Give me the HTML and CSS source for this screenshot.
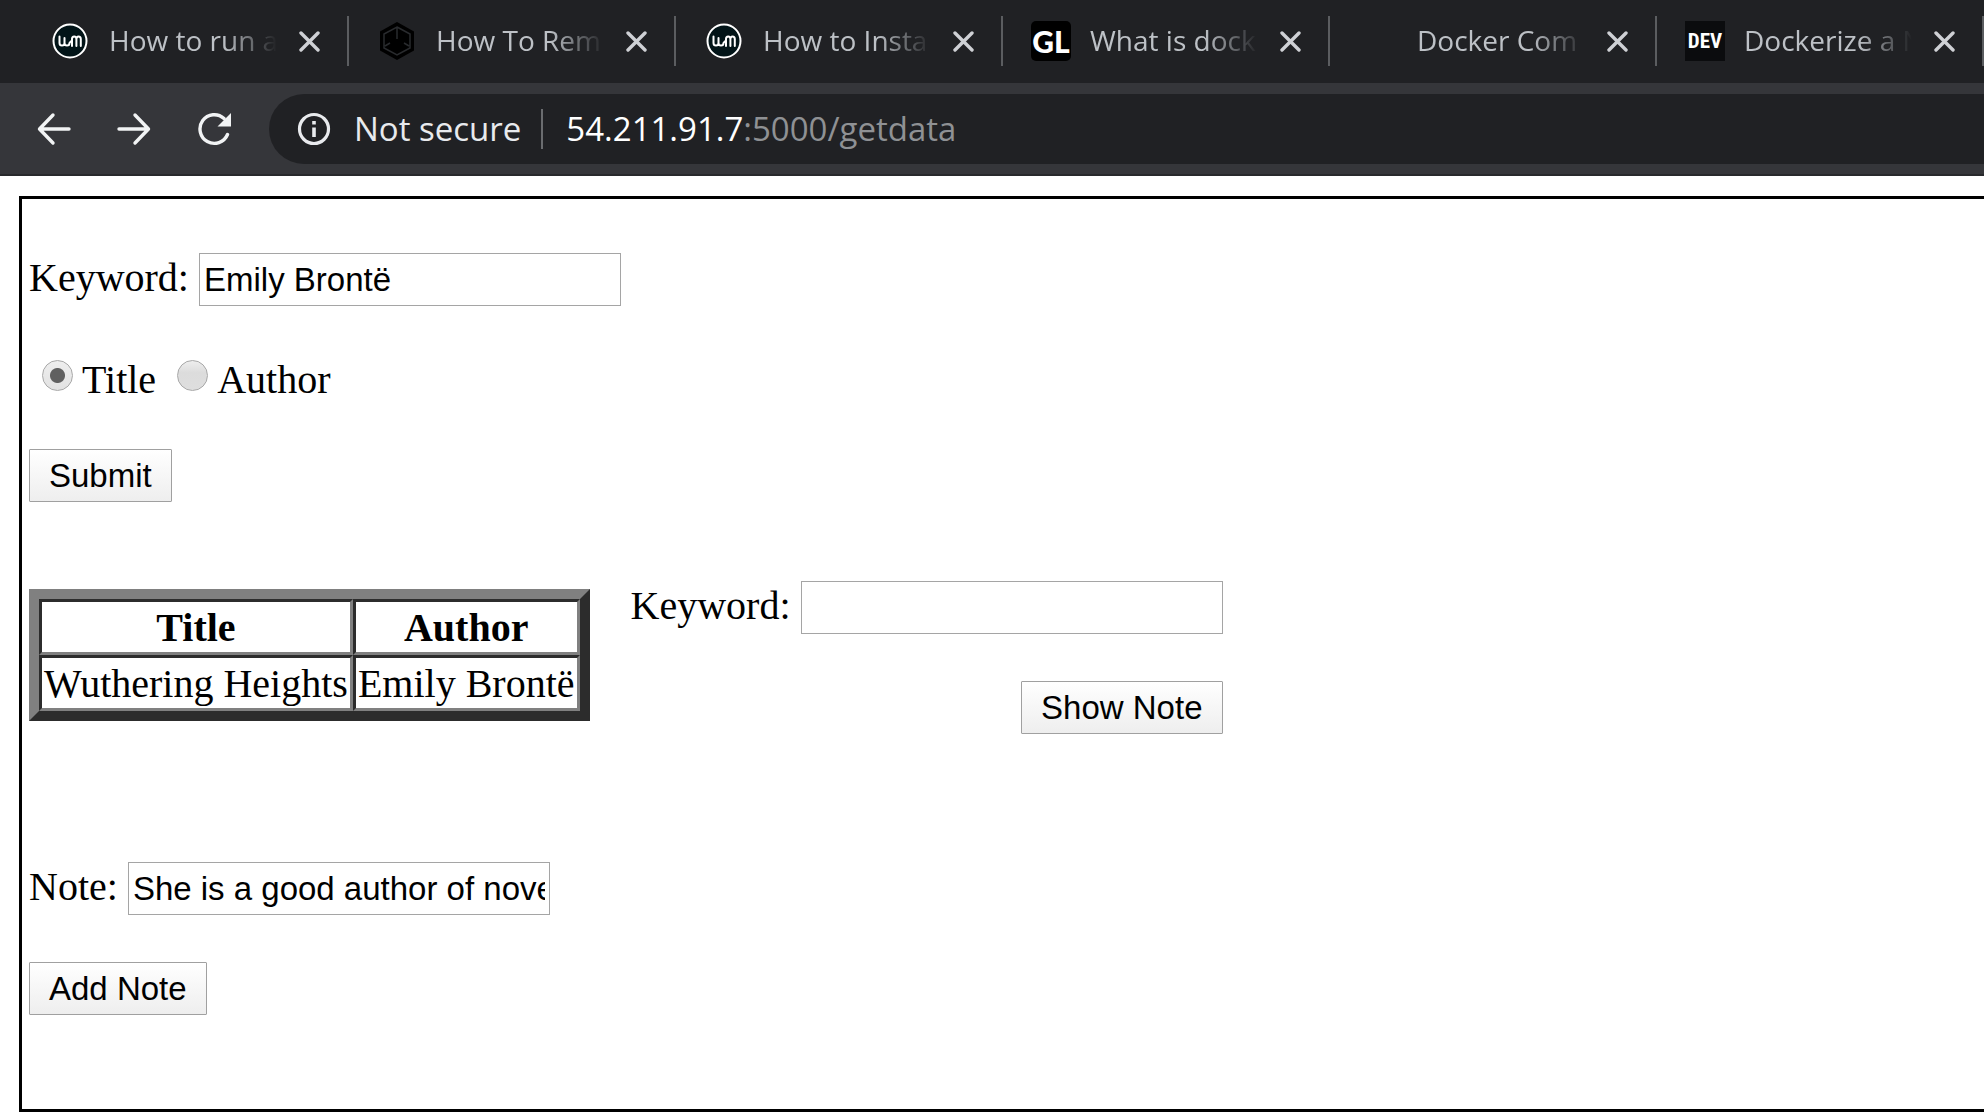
FILE: index.html
```html
<!DOCTYPE html>
<html lang="en">
<head>
<meta charset="utf-8">
<title>Get data</title>
<link rel="stylesheet" href="styles.css">
</head>
<body>
<svg class="sprite" aria-hidden="true">
  <symbol id="close" viewBox="0 0 21 21"><path d="M2 2l17 17M19 2L2 19" fill="none" stroke="currentColor" stroke-width="3.4" stroke-linecap="round"/></symbol>
  <symbol id="wm" viewBox="0 0 40 40">
    <circle cx="20" cy="20" r="16.5" fill="#021418" stroke="#fff" stroke-width="2"/>
    <path d="M9.500 15.500v6.500q0 2.500 2.500 2.500t2.500-2.500v-5v5q0 2.500 2.500 2.500t2.500-2.500q1-1.500 2.500-2.500M22 25v-7q0-2.500 2.200-2.500t2.200 2.500v7v-7q0-2.500 2.200-2.500t2.200 2.500v7" fill="none" stroke="#fff" stroke-width="2" stroke-linecap="round" stroke-linejoin="round"/>
  </symbol>
</svg>

<header class="browser">
  <nav class="tabs" aria-label="Tabs">
    <div class="tab">
      <svg class="favicon"><use href="#wm"/></svg>
      <a class="tab-title" href="#">How to run a</a>
      <button class="tab-close" aria-label="Close tab"><svg><use href="#close"/></svg></button>
    </div>
    <div class="tab">
      <svg class="favicon" viewBox="0 0 40 40">
        <path d="M20 1l17 9.500v19L20 39 3 29.500v-19z" fill="#000"/>
        <path d="M20 6l13 7v14l-13 7-13-7V13zM20 7v11M8 25l5-3M32 25l-5-3" fill="none" stroke="#292b2e" stroke-width="1.500"/>
      </svg>
      <a class="tab-title" href="#">How To Rem</a>
      <button class="tab-close" aria-label="Close tab"><svg><use href="#close"/></svg></button>
    </div>
    <div class="tab">
      <svg class="favicon"><use href="#wm"/></svg>
      <a class="tab-title" href="#">How to Insta</a>
      <button class="tab-close" aria-label="Close tab"><svg><use href="#close"/></svg></button>
    </div>
    <div class="tab">
      <span class="favicon badge badge-gl">GL</span>
      <a class="tab-title" href="#">What is dock</a>
      <button class="tab-close" aria-label="Close tab"><svg><use href="#close"/></svg></button>
    </div>
    <div class="tab">
      <span class="favicon"></span>
      <a class="tab-title" href="#">Docker Com</a>
      <button class="tab-close" aria-label="Close tab"><svg><use href="#close"/></svg></button>
    </div>
    <div class="tab">
      <span class="favicon badge badge-dev">DEV</span>
      <a class="tab-title" href="#">Dockerize a N</a>
      <button class="tab-close" aria-label="Close tab"><svg><use href="#close"/></svg></button>
    </div>
  </nav>
  <div class="toolbar">
    <button class="nav-button" aria-label="Back"><svg viewBox="0 0 34 34"><path d="M32 17H3M16 3L2.500 17 16 31" fill="none" stroke="currentColor" stroke-width="3.400" stroke-linecap="round" stroke-linejoin="round"/></svg></button>
    <button class="nav-button" aria-label="Forward"><svg viewBox="0 0 34 34"><path d="M2 17h29M18 3l13.500 14L18 31" fill="none" stroke="currentColor" stroke-width="3.400" stroke-linecap="round" stroke-linejoin="round"/></svg></button>
    <button class="nav-button" aria-label="Reload"><svg viewBox="0 0 34 34"><path d="M30.500 22.500A14.300 14.300 0 1 1 27 6.500" fill="none" stroke="currentColor" stroke-width="3.400" stroke-linecap="round"/><path d="M34 1v13.500H20.500z" fill="currentColor"/></svg></button>
    <div class="address">
      <svg class="info" viewBox="0 0 34 34"><circle cx="17" cy="17" r="14.500" fill="none" stroke="currentColor" stroke-width="3.200"/><path d="M15.200 15.500h3.600V25h-3.600zM15.200 9h3.600v3.600h-3.600z" fill="currentColor"/></svg>
      <span class="security">Not secure</span>
      <span class="url">54.211.91.7<span class="path">:5000/getdata</span></span>
    </div>
  </div>
</header>

<main class="frame">
  <form class="stack">
    <div class="field"><label for="keyword">Keyword:</label><input class="text" id="keyword" type="text" value="Emily Brontë"></div>
    <div class="choices">
      <input class="radio" type="radio" name="by" id="by-title" checked><label for="by-title">Title</label>
      <input class="radio" type="radio" name="by" id="by-author"><label for="by-author">Author</label>
    </div>
    <button class="button" type="button">Submit</button>
  </form>

  <section class="results">
    <table class="books">
      <thead><tr><th>Title</th><th>Author</th></tr></thead>
      <tbody><tr><td>Wuthering Heights</td><td>Emily Brontë</td></tr></tbody>
    </table>
    <form class="stack stack-end">
      <div class="field"><label for="note-keyword">Keyword:</label><input class="text" id="note-keyword" type="text"></div>
      <button class="button" type="button">Show Note</button>
    </form>
  </section>

  <form class="stack">
    <div class="field"><label for="note">Note:</label><input class="text" id="note" type="text" value="She is a good author of novels"></div>
    <button class="button" type="button">Add Note</button>
  </form>
</main>
</body>
</html>
```
FILE: styles.css
```css
* { box-sizing: border-box; }

body {
  margin: 0;
  background: #fff;
  color: #000;
  font: 40px/46px "Liberation Serif", "Times New Roman", serif;
  overflow-x: hidden;
}

button { font: inherit; color: inherit; }

.sprite { display: none; }

/* Browser chrome */
.browser {
  overflow: hidden;
  font-family: "Open Sans", "Segoe UI", sans-serif;
  border-bottom: 2px solid #28292c;
}

.tabs {
  display: flex;
  padding: 16px 0 17px 22px;
  background: #202124;
}

.tab {
  flex: 0 0 327px;
  min-width: 0;
  display: flex;
  align-items: center;
  height: 50px;
  padding: 0 27px 0 28px;
  border-right: 2px solid #5b5d60;
}

.favicon {
  flex: none;
  width: 40px;
  height: 40px;
}

.badge {
  display: flex;
  align-items: center;
  justify-content: center;
  overflow: hidden;
  background: #000;
  color: #fff;
  font-weight: 700;
}

.badge-gl {
  border-radius: 5px;
  font-family: Lato, sans-serif;
  font-size: 30px;
  font-weight: 900;
}

.badge-dev {
  background: #0b0c0e;
  font-family: "Liberation Sans Narrow", "Roboto Condensed", Roboto, sans-serif;
  font-size: 21px;
}

.tab-title {
  flex: 1;
  min-width: 0;
  margin: 0 22px 0 19px;
  padding-bottom: 2px;
  overflow: hidden;
  white-space: nowrap;
  color: #bdc1c6;
  font-size: 28px;
  line-height: 40px;
  text-decoration: none;
  mask-image: linear-gradient(to right, #000 68%, transparent);
}

.tab-close {
  flex: none;
  display: flex;
  padding: 0;
  border: 0;
  background: none;
  color: #cfd1d5;
}

.tab-close svg { width: 21px; height: 21px; }

.toolbar {
  display: flex;
  align-items: center;
  height: 91px;
  padding: 0 0 0 37px;
  background: #35363a;
}

.nav-button {
  flex: none;
  display: flex;
  margin-right: 46px;
  padding: 0;
  border: 0;
  background: none;
  color: #f1f3f4;
}

.nav-button svg { width: 34px; height: 34px; }

.nav-button:nth-child(3) { margin-right: 38px; }

.address {
  flex: 1;
  display: flex;
  align-items: center;
  height: 70px;
  padding-left: 28px;
  border-radius: 35px 0 0 35px;
  background: #202124;
  color: #e8eaed;
  font-size: 33px;
  white-space: nowrap;
}

.info { width: 34px; height: 34px; margin-right: 23px; }

.security {
  padding-right: 20px;
  border-right: 2px solid #6a6c6f;
  line-height: 40px;
}

.url {
  margin-left: 23px;
  color: #fff;
  line-height: 40px;
}

.path { color: #8f9194; }

/* Page */
.frame {
  margin: 20px 0 4px 19px;
  padding: 54px 0 94px 7px;
  border: 3px solid #000;
  border-right: 0;
}

.stack {
  display: flex;
  flex-direction: column;
  align-items: flex-start;
  gap: 47px;
}

.stack-end { align-items: flex-end; }

.field {
  display: flex;
  align-items: center;
  gap: 10px;
}

.field label { padding-bottom: 3px; }

.text {
  width: 422px;
  height: 53px;
  padding: 0 4px;
  border: 1px solid #a5a5a5;
  background: #fff;
  color: #000;
  font: 33px "Liberation Sans", Arial, sans-serif;
}

.choices {
  display: flex;
  align-items: flex-end;
  height: 49px;
  line-height: 44px;
}

.radio {
  appearance: none;
  width: 31px;
  height: 31px;
  margin: 0 9px 11px 13px;
  border: 1px solid #a8a8a8;
  border-radius: 50%;
  background: linear-gradient(#eee, #dcdcdc 40%, #dedede);
}

.radio:checked {
  background: radial-gradient(circle, #606060 7px, transparent 8px), linear-gradient(#eee, #e2e2e2);
}

.choices label + .radio { margin-left: 21px; }

.button {
  height: 53px;
  padding: 0 19px;
  border: 1px solid #a0a0a0;
  border-radius: 1px;
  background: linear-gradient(#fff, #eee);
  color: #000;
  font: 33px "Liberation Sans", Arial, sans-serif;
}

.results {
  display: flex;
  align-items: flex-start;
  gap: 41px;
  margin: 79px 0 128px;
}

.books {
  margin-top: 8px;
  border: 10px solid;
  border-color: #808080 #2c2c2c #2c2c2c #808080;
  border-spacing: 0;
}

.books th,
.books td {
  padding: 3px 2px 1px;
  border: 3px solid;
  border-color: #2c2c2c #808080 #808080 #2c2c2c;
  white-space: nowrap;
}
```
